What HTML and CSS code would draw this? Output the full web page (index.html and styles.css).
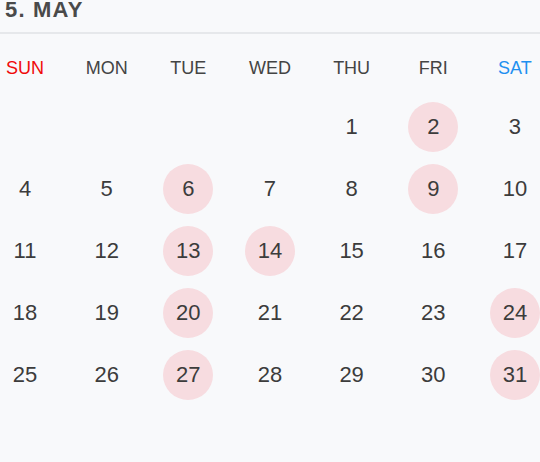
FILE: index.html
```html
<!DOCTYPE html>
<html>
<head>
<meta charset="utf-8">
<link rel="stylesheet" href="styles.css">
</head>
<body>
<div class="cal">
  <div class="head">5. MAY</div>
  <div class="week">
    <div class="wd sun">SUN</div>
    <div class="wd">MON</div>
    <div class="wd">TUE</div>
    <div class="wd">WED</div>
    <div class="wd">THU</div>
    <div class="wd">FRI</div>
    <div class="wd sat">SAT</div>
  </div>
  <div class="days">
    <div class="row">
      <div class="d"></div><div class="d"></div><div class="d"></div><div class="d"></div>
      <div class="d">1</div><div class="d hl">2</div><div class="d">3</div>
    </div>
    <div class="row">
      <div class="d">4</div><div class="d">5</div><div class="d hl">6</div><div class="d">7</div>
      <div class="d">8</div><div class="d hl">9</div><div class="d">10</div>
    </div>
    <div class="row">
      <div class="d">11</div><div class="d">12</div><div class="d hl">13</div><div class="d hl">14</div>
      <div class="d">15</div><div class="d">16</div><div class="d">17</div>
    </div>
    <div class="row">
      <div class="d">18</div><div class="d">19</div><div class="d hl">20</div><div class="d">21</div>
      <div class="d">22</div><div class="d">23</div><div class="d hl">24</div>
    </div>
    <div class="row">
      <div class="d">25</div><div class="d">26</div><div class="d hl">27</div><div class="d">28</div>
      <div class="d">29</div><div class="d">30</div><div class="d hl">31</div>
    </div>
  </div>
</div>
</body>
</html>
```

FILE: styles.css
```css
html, body {
  margin: 0;
  padding: 0;
  background: #f8f9fb;
}
body {
  width: 540px;
  height: 462px;
  overflow: hidden;
  font-family: "Liberation Sans", Arial, sans-serif;
  color: #444;
}
.cal {
  display: flex;
  flex-direction: column;
}
.head {
  height: 32px;
  padding-left: 5px;
  font-size: 22px;
  line-height: 20px;
  font-weight: bold;
  letter-spacing: 1.2px;
  color: #4a4a4a;
  border-bottom: 2px solid #e6e8eb;
}
.week {
  height: 68px;
  display: flex;
  justify-content: space-between;
  align-items: center;
}
.wd {
  width: 50px;
  text-align: center;
  font-size: 18px;
  color: #444;
}
.wd.sun { color: #f00a0a; }
.wd.sat { color: #1e90f0; }
.days {
  display: flex;
  flex-direction: column;
  gap: 12px;
}
.row {
  display: flex;
  justify-content: space-between;
}
.d {
  width: 50px;
  height: 50px;
  display: flex;
  align-items: center;
  justify-content: center;
  font-size: 22px;
  color: #3c3c3c;
  border-radius: 50%;
}
.d.hl {
  background: #f7dce0;
}
```
